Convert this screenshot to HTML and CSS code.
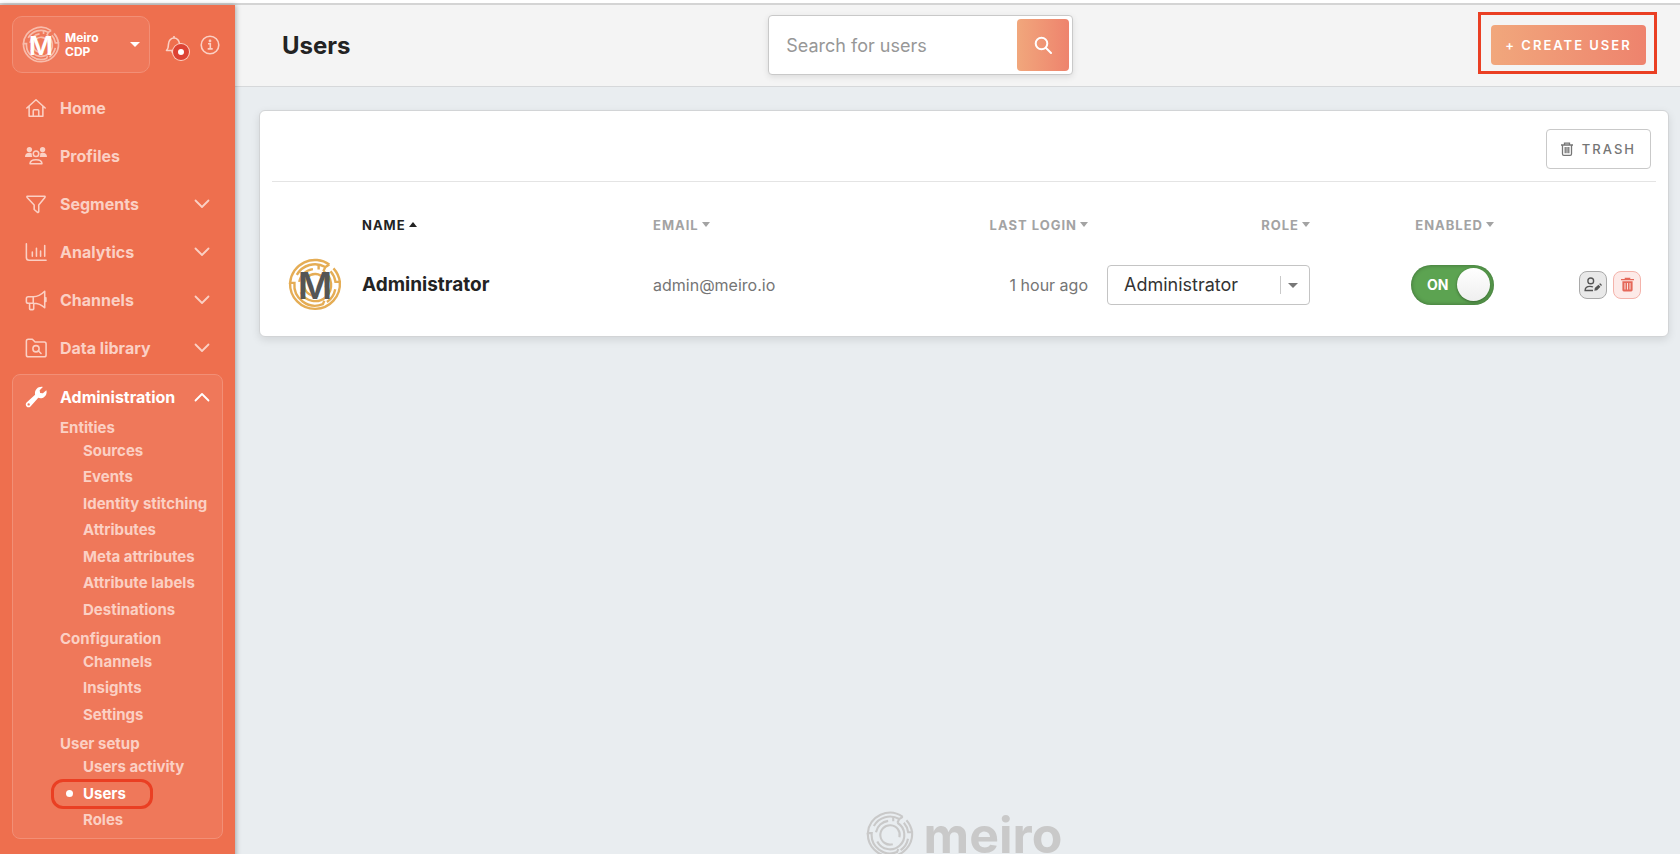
FILE: index.html
```html
<!DOCTYPE html>
<html lang="en">
<head>
  <meta charset="UTF-8" />
  <meta name="viewport" content="width=device-width, initial-scale=1.0"/>
  <title>Users</title>
  <link rel="stylesheet" href="styles.css">
</head>
<body>
  <svg class="sprite" aria-hidden="true">
    <symbol id="maze" viewBox="0 0 52 52">
      <g fill="none" stroke="currentColor" stroke-width="2.3">
        <path d="M39.8 6.3A24 24 0 0 0 2 24h4.2A20 20 0 0 0 33.5 44.5l1.5-3.3"/>
        <path d="M2 24A24 24 0 1 0 49.9 23h-4.2A20 20 0 0 0 41 12.7"/>
        <path d="M43.8 10A24 24 0 0 1 49.9 23"/>
        <path d="M8.5 16.3A20 20 0 0 1 36 8.7l3.8-2.4M36 8.7l-2 4"/>
        <path d="M10.8 23A15.5 15.5 0 0 1 24 10.7M29.500 6.500v4.500"/>
        <path d="M34 12.7A15.5 15.5 0 1 1 12.2 33"/>
        <path d="M45.5 30A20 20 0 0 1 37.5 42.4"/>
        <path d="M36.2 28.5A10.5 10.5 0 1 0 29 36"/>
      </g>
    </symbol>
    <symbol id="chevron" viewBox="0 0 16 16">
      <path d="M1.5 4.5 8 11l6.5-6.5" fill="none" stroke="currentColor" stroke-width="1.8" stroke-linecap="round" stroke-linejoin="round"/>
    </symbol>
  </svg>

  <div class="topbar"></div>
  <div class="app">
    <aside class="sidebar">
      <div class="account">
        <button class="account-btn" type="button">
          <svg class="account-logo" viewBox="0 0 52 52" aria-hidden="true">
            <use href="#maze" class="account-ring"/>
            <text x="26" y="39" class="logo-m">M</text>
          </svg>
          <span class="account-name">Meiro<br>CDP</span>
          <span class="caret"></span>
        </button>
        <button class="icon-btn bell" type="button" aria-label="Notifications">
          <svg width="18" height="20" viewBox="0 0 18 20" fill="none" stroke="currentColor" stroke-width="1.6" stroke-linejoin="round">
            <path d="M9 1v2M1.5 15.5c1.6-1.6 2-3 2-6.500C3.500 5.500 6 3 9 3s5.500 2.500 5.500 6c0 3.500.4 4.900 2 6.500zM7 16c0 2.500 4 2.500 4 0"/>
          </svg>
          <span class="badge"></span>
        </button>
        <button class="icon-btn" type="button" aria-label="Information">
          <svg width="20" height="20" viewBox="0 0 20 20" fill="none" stroke="currentColor" stroke-width="1.6">
            <circle cx="10" cy="10" r="8.800"/>
            <path d="M8 8.700h2.300v5M7.700 13.900h5"/>
            <circle cx="10" cy="6" r=".6"/>
          </svg>
        </button>
      </div>

      <nav class="nav">
        <a class="nav-item" href="#">
          <svg class="nav-icon" viewBox="0 0 24 24"><path d="M2 12 12 3l10 9M4.500 10v11h15V10M9 21v-6q0-1 1-1h4q1 0 1 1v6"/></svg>
          <span>Home</span>
        </a>
        <a class="nav-item" href="#">
          <svg class="nav-icon" viewBox="0 0 24 24">
            <g fill="currentColor" stroke="none"><circle cx="4.800" cy="5" r="2.900"/><circle cx="19.200" cy="5" r="2.900"/><path d="M0 13c0-3 2-4.500 4.500-4.500 1.500 0 2.500.4 3 1-.3 1.500 0 2.500.6 3.500zM24 13c0-3-2-4.500-4.500-4.500-1.500 0-2.500.4-3 1 .3 1.500 0 2.500-.6 3.500z"/></g>
            <circle cx="12" cy="9.500" r="3"/><path d="M5.500 20.500c0-3 2-4.500 6.500-4.500s6.500 1.500 6.500 4.500z"/>
          </svg>
          <span>Profiles</span>
        </a>
        <a class="nav-item" href="#">
          <svg class="nav-icon" viewBox="0 0 24 24"><path d="M2.500 3.500h19q.8.600.2 1.500L15 13v7.500L14 21.300 10 18v-5L2.300 5q-.6-.9.200-1.500z"/></svg>
          <span>Segments</span>
          <svg class="chevron"><use href="#chevron"/></svg>
        </a>
        <a class="nav-item" href="#">
          <svg class="nav-icon" viewBox="0 0 24 24"><path d="M1.500 3v15q0 3 3 3h18.500M8 12v4.500M12.500 8v8.500M17 11v5.500M21.500 5v11.500"/></svg>
          <span>Analytics</span>
          <svg class="chevron"><use href="#chevron"/></svg>
        </a>
        <a class="nav-item" href="#">
          <svg class="nav-icon" viewBox="0 0 24 24"><path d="M21.500 2.500v18C18 17 13 15.500 9 15.500H3.500q-2 0-2-2v-3q0-2 2-2H9c4 0 9-2.500 12.500-6zM9 8.500v7M5 15.500v6q0 1 1 1h2.500q1 0 1-1v-6M22.800 9.500v4"/></svg>
          <span>Channels</span>
          <svg class="chevron"><use href="#chevron"/></svg>
        </a>
        <a class="nav-item" href="#">
          <svg class="nav-icon" viewBox="0 0 24 24"><path d="M1.500 4.500q0-2 2-2h4.500l3 3h10q2 0 2 2V19.500q0 2-2 2H3.500q-2 0-2-2zM14.500 15l3 3"/><circle cx="12" cy="12.800" r="3.400"/></svg>
          <span>Data library</span>
          <svg class="chevron"><use href="#chevron"/></svg>
        </a>
      </nav>

      <div class="nav-open">
        <a class="nav-item active" href="#">
          <svg class="nav-icon" viewBox="0 0 24 24"><path fill="currentColor" stroke="none" fill-rule="evenodd" d="M19.500 1 16 4.500l.5 3 3 .5L23.300 4.500c1.200 4-1.300 8.300-5.300 8.800-1.300.2-2.500 0-3.500-.4L6 22.300c-1.300 1.300-3.200 1.200-4.300 0s-1.200-3 0-4.300L11 9.500C10 4.500 14 0 19.500 1zM4 18.800a1.300 1.300 0 1 0 0 2.600 1.300 1.300 0 0 0 0-2.600z"/></svg>
          <span>Administration</span>
          <svg class="chevron up"><use href="#chevron"/></svg>
        </a>
        <ul class="submenu">
          <li class="section">Entities</li>
          <li><a href="#">Sources</a></li>
          <li><a href="#">Events</a></li>
          <li><a href="#">Identity stitching</a></li>
          <li><a href="#">Attributes</a></li>
          <li><a href="#">Meta attributes</a></li>
          <li><a href="#">Attribute labels</a></li>
          <li><a href="#">Destinations</a></li>
          <li class="section">Configuration</li>
          <li><a href="#">Channels</a></li>
          <li><a href="#">Insights</a></li>
          <li><a href="#">Settings</a></li>
          <li class="section">User setup</li>
          <li><a href="#">Users activity</a></li>
          <li class="current"><a href="#">Users</a></li>
          <li><a href="#">Roles</a></li>
        </ul>
      </div>
    </aside>

    <main class="main">
      <header class="header">
        <h1>Users</h1>
        <form class="search">
          <input type="search" placeholder="Search for users" aria-label="Search for users">
          <button type="button" aria-label="Search">
            <svg width="18" height="18" viewBox="0 0 18 18" fill="none" stroke="currentColor" stroke-width="2" stroke-linecap="round"><circle cx="7.500" cy="7.500" r="5.800"/><path d="m12 12 5 5"/></svg>
          </button>
        </form>
        <button class="create-btn" type="button">+ CREATE USER</button>
      </header>

      <section class="card">
        <div class="card-actions">
          <button class="trash-btn" type="button">
            <svg width="12" height="14" viewBox="0 0 12 14" fill="none" stroke="currentColor" stroke-width="1.3"><path d="M0 3h12M3.500 3V1.200h5V3M1.500 3v9q0 1.300 1.300 1.300h6.400q1.300 0 1.300-1.300V3M4.200 5v6.300M6 5v6.300M7.800 5v6.300"/></svg>
            TRASH
          </button>
        </div>
        <table class="users">
          <thead>
            <tr>
              <th class="col-avatar"></th>
              <th class="sorted">NAME<span class="sort up"></span></th>
              <th>EMAIL<span class="sort"></span></th>
              <th class="col-login right">LAST LOGIN<span class="sort"></span></th>
              <th class="col-role right">ROLE<span class="sort"></span></th>
              <th class="col-enabled right">ENABLED<span class="sort"></span></th>
              <th class="col-tools"></th>
            </tr>
          </thead>
          <tbody>
            <tr>
              <td>
                <svg class="avatar" viewBox="0 0 52 52" aria-hidden="true">
                  <use href="#maze" class="avatar-ring"/>
                  <text x="26" y="39" class="logo-m">M</text>
                </svg>
              </td>
              <td class="name">Administrator</td>
              <td>admin@meiro.io</td>
              <td class="right">1 hour ago</td>
              <td class="right">
                <div class="select">
                  <select aria-label="Role">
                    <option>Administrator</option>
                  </select>
                </div>
              </td>
              <td class="right">
                <label class="toggle">
                  <input type="checkbox" checked>
                  <span>ON</span>
                </label>
              </td>
              <td>
                <div class="tools">
                  <button class="tool" type="button" aria-label="Edit user">
                    <svg width="18" height="15" viewBox="0 0 20 16" fill="none" stroke="currentColor" stroke-width="1.500"><circle cx="7.500" cy="4" r="3.200"/><path d="M10 14.700H1.200c0-3.300 2-4.700 5.300-4.700 1.500 0 2.500.2 3.500.8"/><path fill="currentColor" stroke="none" d="m11.500 15 .5-3 4-3.700 2.300 2.300-3.800 3.900zM16.800 7.500l1.200-1 2 2-1 1.300z"/></svg>
                  </button>
                  <button class="tool danger" type="button" aria-label="Delete user">
                    <svg width="13" height="15" viewBox="0 0 14 16" fill="currentColor"><path d="M0 2h4V.8h6V2h4v1.500H0z"/><path fill-rule="evenodd" d="M1.500 4.500h11V14q0 1.500-1.500 1.500H3q-1.500 0-1.500-1.500zM3.800 6.500v7h1v-7zM6.500 6.500v7h1v-7zM9.200 6.500v7h1v-7z"/></svg>
                  </button>
                </div>
              </td>
            </tr>
          </tbody>
        </table>
      </section>

      <footer class="footer">
        <svg width="48" height="48" aria-hidden="true"><use href="#maze"/></svg>
        <span>meiro</span>
      </footer>
    </main>
  </div>
</body>
</html>
```
FILE: styles.css
```css
*, *::before, *::after {
  box-sizing: border-box;
}

body {
  margin: 0;
  height: 100vh;
  overflow: hidden;
  background: #e9edf0;
  color: #232323;
  font-family: Inter, 'Liberation Sans', sans-serif;
  font-size: 16px;
}

button, input, select {
  font-family: inherit;
}

button {
  cursor: pointer;
}

a {
  color: inherit;
  text-decoration: none;
}

.sprite {
  position: absolute;
  width: 0;
  height: 0;
}

.topbar {
  height: 5px;
  background: white;
  border-bottom: 2px solid #d4d4d4;
}

.app {
  display: flex;
  height: 100vh;
}

/* sidebar */
.sidebar {
  position: relative;
  display: flex;
  flex-direction: column;
  width: 235px;
  flex-shrink: 0;
  padding: 11px 12px 20px;
  background: #ee6f4e;
  color: #fbd0c4;
  box-shadow: 1px 0 5px rgba(0, 0, 0, 0.3);
}

.account {
  display: flex;
  align-items: center;
  margin-bottom: 11px;
}

.account-btn {
  display: flex;
  align-items: center;
  width: 138px;
  height: 57px;
  margin-right: 15px;
  padding: 0 9px;
  background: #ef785a;
  border: 1px solid #f28f76;
  border-radius: 10px;
  color: white;
  text-align: left;
}

.account-logo {
  width: 38px;
  height: 38px;
  margin-right: 5px;
}

.account-ring {
  color: #f8bcab;
}

.logo-m {
  font-size: 36px;
  font-weight: 600;
  text-anchor: middle;
  fill: currentColor;
}

.account-name {
  font-size: 12px;
  font-weight: 700;
  line-height: 14px;
}

.caret {
  margin-left: auto;
  border: 5px solid transparent;
  border-top-color: white;
  border-bottom: 0;
}

.icon-btn {
  position: relative;
  display: flex;
  padding: 0;
  background: none;
  border: 0;
  color: #fbd0c4;
}

.bell {
  margin-right: 17px;
}

.badge {
  position: absolute;
  left: 8px;
  top: 9px;
  width: 16px;
  height: 16px;
  background: white;
  border: 5px solid #dd4334;
  border-radius: 50%;
  box-shadow: 0 0 0 1px #fbd0c4;
}

.nav-item {
  display: flex;
  align-items: center;
  height: 48px;
  padding: 0 13px;
  font-weight: 700;
}

.nav-icon {
  width: 22px;
  height: 22px;
  margin-right: 13px;
  fill: none;
  stroke: currentColor;
  stroke-width: 1.7;
  stroke-linejoin: round;
  stroke-linecap: round;
}

.chevron {
  width: 16px;
  height: 16px;
  margin-left: auto;
}

.chevron.up {
  transform: rotate(180deg);
}

.nav-open {
  display: flex;
  flex-direction: column;
  flex: 1;
  margin-top: 2px;
  padding: 7px 0 5px;
  background: #ef785a;
  border: 1px solid #f28f76;
  border-radius: 8px;
}

.nav-open .nav-item {
  height: 29px;
  padding: 0 12px;
}

.active {
  color: white;
}

.submenu {
  display: flex;
  flex-direction: column;
  flex: 1;
  margin: 0;
  padding: 0;
  list-style: none;
  font-size: 15px;
  font-weight: 700;
}

.submenu li {
  display: flex;
  align-items: center;
  flex: 1;
  padding-left: 70px;
}

.submenu .section {
  flex: none;
  height: 26px;
  padding: 6px 0 0 47px;
}

.submenu .current {
  position: relative;
  color: white;
}

.current a::before {
  content: "";
  position: absolute;
  left: 53px;
  top: 10px;
  width: 7px;
  height: 7px;
  background: white;
  border-radius: 50%;
}

.current::after {
  content: "";
  position: absolute;
  left: 38px;
  top: -1px;
  width: 102px;
  height: 30px;
  border: 3px solid #ea3f23;
  border-radius: 12px;
}

/* main column */
.main {
  display: flex;
  flex-direction: column;
  flex: 1;
  min-width: 0;
}

.header {
  display: flex;
  align-items: center;
  justify-content: space-between;
  height: 82px;
  padding: 0 34px 1px 47px;
  background: #f4f4f4;
  border-bottom: 1px solid #d6d8da;
}

h1 {
  margin: 0;
  font-size: 24px;
  font-weight: 700;
}

.search {
  display: flex;
  width: 305px;
  padding: 3px;
  background: white;
  border: 1px solid #c9c9c9;
  border-radius: 4px;
  box-shadow: 0 2px 6px rgba(0, 0, 0, 0.1);
}

.search input {
  flex: 1;
  min-width: 0;
  padding: 0 14px;
  border: 0;
  outline: 0;
  background: none;
  font-size: 18px;
}

.search input::placeholder {
  color: #979797;
}

.search button {
  display: flex;
  align-items: center;
  justify-content: center;
  width: 52px;
  height: 52px;
  border: 0;
  border-radius: 4px;
  background: linear-gradient(90deg, #f1a77c, #ee836d);
  color: white;
}

.create-btn {
  position: relative;
  width: 155px;
  height: 40px;
  padding: 0;
  border: 0;
  border-radius: 4px;
  background: linear-gradient(90deg, #f1a77c, #ee836d);
  color: white;
  font-size: 13px;
  font-weight: 600;
  letter-spacing: 2px;
}

.create-btn::after {
  content: "";
  position: absolute;
  inset: -13px -11px -9px -13px;
  border: 3px solid #ea3f23;
}

.card {
  margin: 23px 11px 0 24px;
  padding: 0 12px 15px;
  background: white;
  border: 1px solid #d2d4d6;
  border-radius: 6px;
  box-shadow: 0 3px 8px rgba(0, 0, 0, 0.1);
}

.card-actions {
  display: flex;
  justify-content: flex-end;
  height: 71px;
  padding: 18px 5px 0 0;
  border-bottom: 1px solid #e4e4e4;
}

.trash-btn {
  display: flex;
  align-items: center;
  gap: 9px;
  height: 40px;
  padding: 0 14px;
  background: white;
  border: 1px solid #c9c9c9;
  border-radius: 4px;
  color: #757575;
  font-size: 13px;
  font-weight: 500;
  letter-spacing: 2px;
}

.users {
  width: 100%;
  table-layout: fixed;
  border-collapse: collapse;
  color: #757575;
}

.users th, .users td {
  padding: 0;
  text-align: left;
}

.users th {
  height: 66px;
  padding-top: 20px;
  color: #a3a3a3;
  font-size: 13px;
  font-weight: 700;
  letter-spacing: 1px;
}

.users td {
  height: 73px;
}

.users .right {
  text-align: right;
}

.users .sorted {
  color: #232323;
}

.col-avatar { width: 90px; }
.col-login { width: 144px; }
.col-role { width: 222px; }
.col-enabled { width: 184px; }
.col-tools { width: 162px; }

.sort {
  display: inline-block;
  margin-left: 3px;
  vertical-align: 3px;
  border: 4px solid transparent;
  border-top: 5px solid currentColor;
  border-bottom: 0;
}

.sort.up {
  border-top: 0;
  border-bottom: 5px solid currentColor;
}

.avatar {
  display: block;
  width: 54px;
  height: 54px;
  margin-left: 16px;
  color: #555;
}

.avatar-ring {
  color: #e5ad55;
}

.users .name {
  color: #232323;
  font-size: 19px;
  font-weight: 700;
}

.select {
  position: relative;
  display: inline-block;
  width: 203px;
  vertical-align: middle;
}

.select select {
  display: block;
  width: 100%;
  height: 40px;
  padding: 0 30px 0 16px;
  appearance: none;
  background: white;
  border: 1px solid #c4c4c4;
  border-radius: 4px;
  color: #333;
  font-size: 18px;
}

/* drop-down arrow and its divider */
.select::before {
  content: "";
  position: absolute;
  right: 29px;
  top: 11px;
  height: 18px;
  border-left: 1px solid #c9c9c9;
}

.select::after {
  content: "";
  position: absolute;
  right: 12px;
  top: 18px;
  border: 5px solid transparent;
  border-top-color: #777;
  border-bottom: 0;
}

.toggle {
  position: relative;
  display: inline-flex;
  align-items: center;
  vertical-align: middle;
  cursor: pointer;
}

.toggle input {
  display: flex;
  align-items: center;
  justify-content: flex-end;
  width: 83px;
  height: 40px;
  margin: 0;
  padding: 4px;
  appearance: none;
  background: #5ca351;
  border-radius: 20px;
  box-shadow: inset 0 0 4px rgba(0, 0, 0, 0.35);
}

.toggle input::before {
  content: "";
  width: 33px;
  height: 33px;
  background: linear-gradient(white, #efefef);
  border-radius: 50%;
  box-shadow: 0 1px 3px rgba(0, 0, 0, 0.4);
}

.toggle span {
  position: absolute;
  left: 16px;
  color: white;
  font-size: 14px;
  font-weight: 700;
}

.tools {
  display: flex;
  justify-content: flex-end;
  gap: 6px;
  padding-right: 15px;
}

.tool {
  display: flex;
  align-items: center;
  justify-content: center;
  width: 28px;
  height: 28px;
  padding: 0;
  background: #e9e9e9;
  border: 1px solid #a9a9a9;
  border-radius: 8px;
  color: #555;
}

.tool.danger {
  background: #fdeae8;
  border-color: #f4b3ab;
  color: #e5685a;
}

.footer {
  display: flex;
  align-items: center;
  justify-content: center;
  gap: 10px;
  height: 48px;
  margin-top: auto;
  padding-left: 13px;
  color: #c9c9c9;
}

.footer span {
  font-size: 50px;
  font-weight: 700;
  line-height: 44px;
}
```
